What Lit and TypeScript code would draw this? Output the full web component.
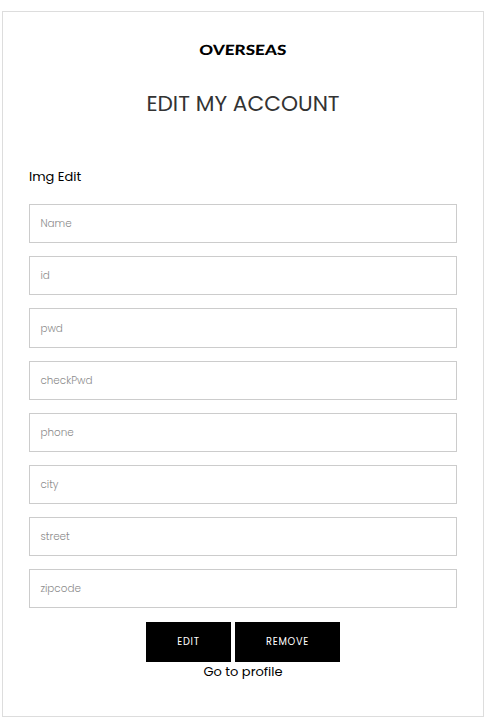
import { LitElement, html, css } from "lit";
import { customElement } from "lit/decorators.js";

@customElement("account-field")
class AccountField extends LitElement {
  static properties = { label: {} };
  declare label: string;

  static styles = css`
    :host { display: block; }
    .input {
      display: block;
      box-sizing: border-box;
      width: 100%;
      height: 100%;
      margin: 0;
      padding: 0 10.4px;
      border: 1px solid #ccc;
      border-radius: 0;
      outline: none;
      background: #fff;
      color: #333;
      font: 300 10.4px Poppins, Inter, sans-serif;
    }
    .input::placeholder { color: #8c8c8c; opacity: 1; }
    :host(.tall) .input { padding-top: 1px; }
  `;

  render() {
    return html`<input class="input" placeholder=${this.label} />`;
  }
}

@customElement("app-root")
class AppRoot extends LitElement {
  static styles = css`
    :host {
      display: block;
      box-sizing: border-box;
      height: 726px;
      padding: 11px 7px 9px 2px;
      background: #fff;
      color: #000;
      font-family: Poppins, Inter, sans-serif;
    }
    .card {
      box-sizing: border-box;
      height: 706px;
      border: 1px solid #ddd;
      padding: 25px 26px 0;
      display: flex;
      flex-direction: column;
      align-items: center;
      white-space: nowrap;
    }
    .logo { height: 24px; overflow: visible; display: block; }
    .logo-text { font: 900 14px Lato, sans-serif; }
    .title {
      margin: 28px 0 0;
      height: 30px;
      font-size: 21.7px;
      line-height: 30px;
      font-weight: 400;
      color: #333;
    }
    .subtitle {
      align-self: flex-start;
      margin-top: 46px;
      height: 24px;
      font-size: 13px;
      line-height: 24px;
    }
    .fields {
      align-self: stretch;
      margin-top: 15px;
      display: grid;
      grid-template-rows: 39px 39px 40px repeat(5, 39px);
      row-gap: 13px;
    }
    .actions { display: flex; gap: 4px; margin-top: 14px; }
    .button {
      height: 40px;
      padding: 0;
      border: 0;
      background: #000;
      color: #fff;
      font: 400 9.75px Poppins, Inter, sans-serif;
      letter-spacing: 0.75px;
    }
    .edit { width: 85px; }
    .remove { width: 105px; }
    .link {
      color: #000;
      text-decoration: none;
      font-size: 13px;
      line-height: 20px;
    }
  `;

  private fields = ["Name", "id", "pwd", "checkPwd", "phone", "city", "street", "zipcode"];

  render() {
    return html`
      <main class="card">
        <svg class="logo" width="90" height="24" viewBox="0 0 90 24" aria-label="OVERSEAS">
          <text class="logo-text" x="2" y="17.6" textLength="87" lengthAdjust="spacingAndGlyphs" transform="skewX(-3)">OVERSEAS</text>
        </svg>
        <h1 class="title">EDIT MY ACCOUNT</h1>
        <div class="subtitle">Img Edit</div>
        <div class="fields">
          ${this.fields.map((label) => html`<account-field class=${label === "pwd" ? "tall" : ""} .label=${label}></account-field>`)}
        </div>
        <div class="actions">
          <button class="button edit">EDIT</button>
          <button class="button remove">REMOVE</button>
        </div>
        <a class="link">Go to profile</a>
      </main>
    `;
  }
}
